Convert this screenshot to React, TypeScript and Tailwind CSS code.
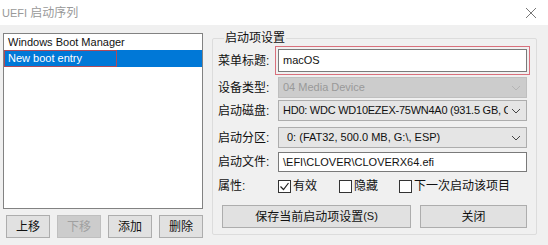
import React from "react";

const font = { fontFamily: '"Liberation Sans", "Noto Sans CJK SC", sans-serif' };

function Chevron({ color = "#555" }: { color?: string }) {
    return (
        <svg width="10" height="6" viewBox="0 0 10 6" className="shrink-0">
            <path d="M1 1 L5 5 L9 1" fill="none" stroke={color} strokeWidth="1" />
        </svg>
    );
}

function Combo({ text, disabled, pl = "pl-[4px]", extra = "" }: { text: string; disabled?: boolean; pl?: string; extra?: string }) {
    return (
        <div
            className={
                (disabled
                    ? "border-[#bfbfbf] bg-[#cccccc] text-[#999] "
                    : "border-[#adadad] bg-[#e5e5e5] text-[#111] ") +
                "flex h-[21px] w-[249px] items-center justify-between gap-[3px] border pr-[5px] text-[11px] " +
                pl
            }
        >
            <span className={"overflow-hidden whitespace-nowrap " + extra}>{text}</span>
            <Chevron color={disabled ? "#b5b5b5" : "#444"} />
        </div>
    );
}

function Check({ checked, label, w }: { checked?: boolean; label: string; w: string }) {
    return (
        <div className={"flex items-center gap-[2px] " + w}>
            <div className="flex h-[13px] w-[13px] shrink-0 items-center justify-center border border-[#333] bg-white">
                {checked && (
                    <svg width="11" height="11" viewBox="0 0 11 11">
                        <path d="M1.5 5.5 L4.5 8.5 L9.5 2" fill="none" stroke="#222" strokeWidth="1.2" />
                    </svg>
                )}
            </div>
            <span className="whitespace-nowrap">{label}</span>
        </div>
    );
}

function Btn({ children, disabled, w }: { children: React.ReactNode; disabled?: boolean; w: string }) {
    return (
        <div
            className={
                (disabled
                    ? "border-[#bfbfbf] bg-[#cccccc] text-[#a0a0a0] "
                    : "border-[#adadad] bg-[#e1e1e1] text-[#111] ") +
                "flex h-[23px] items-center justify-center border " +
                w
            }
        >
            {children}
        </div>
    );
}

export default function App() {
    const labels = "w-[60px] shrink-0 whitespace-nowrap";
    return (
        <div className="h-[245px] w-[548px] overflow-hidden bg-[#f0f0f0] text-[12px] leading-none" style={font}>
            {/* title bar */}
            <div className="flex h-[25px] items-center justify-between bg-white pl-[2px] pr-[11px] text-[#999]">
                <span>
                    <span className="text-[11px]">UEFI </span>启动序列
                </span>
                <svg width="12" height="12" viewBox="0 0 12 12">
                    <path d="M1 1 L11 11 M11 1 L1 11" stroke="#777" strokeWidth="1" />
                </svg>
            </div>

            <div className="flex">
                {/* left column */}
                <div className="ml-[3px] mt-[8px] flex w-[200px] flex-col">
                    <div className="h-[176px] border border-[#828282] bg-white text-[11px] text-[#111]">
                        <div className="flex h-[16px] items-center pl-[4px]">Windows Boot Manager</div>
                        <div className="flex h-[17px] items-center bg-[#0078d7] text-white">
                            <span className="flex h-[17px] w-[113px] items-center border border-[#b04a5a] pl-[3px]">
                                New boot entry
                            </span>
                        </div>
                    </div>
                    <div className="mt-[6px] flex gap-[7px] pl-[3px]">
                        <Btn w="w-[44px]">上移</Btn>
                        <Btn w="w-[44px]" disabled>下移</Btn>
                        <Btn w="w-[44px]">添加</Btn>
                        <Btn w="w-[44px]">删除</Btn>
                    </div>
                </div>

                {/* group box */}
                <fieldset className="ml-[9px] mt-[7px] h-[203px] w-[325px] rounded-[2px] border border-[#dcdcdc] pl-[5px]">
                    <legend className="ml-[6px] px-[1px] text-[#111]">启动项设置</legend>
                    <div className="flex flex-col text-[#111]">
                        <div className="mt-[5px] flex h-[23px] items-center">
                            <span className={labels}>菜单标题:</span>
                            <div className="flex h-[23px] w-[249px] items-center border border-[#7a7a7a] bg-white pl-[4px] text-[11px] outline outline-1 outline-offset-[2px] outline-[#d9707c]">
                                macOS
                            </div>
                        </div>
                        <div className="mt-[5px] flex h-[21px] items-center">
                            <span className={labels}>设备类型:</span>
                            <Combo text="04 Media Device" disabled />
                        </div>
                        <div className="mt-[2px] flex h-[21px] items-center">
                            <span className={labels}>启动磁盘:</span>
                            <Combo text="HD0: WDC WD10EZEX-75WN4A0 (931.5 GB, C" extra="tracking-[-0.25px]" />
                        </div>
                        <div className="mt-[6px] flex h-[21px] items-center">
                            <span className={labels}>启动分区:</span>
                            <Combo text="0: (FAT32, 500.0 MB, G:\, ESP)" pl="pl-[8px]" />
                        </div>
                        <div className="mt-[4px] flex h-[20px] items-center">
                            <span className={labels}>启动文件:</span>
                            <div className="flex h-[20px] w-[249px] items-center border border-[#7a7a7a] bg-white pl-[4px] text-[11px]">
                                \EFI\CLOVER\CLOVERX64.efi
                            </div>
                        </div>
                        <div className="mt-[5px] flex h-[18px] items-center">
                            <span className={labels}>属性:</span>
                            <div className="flex">
                                <Check checked label="有效" w="w-[61px]" />
                                <Check label="隐藏" w="w-[60px]" />
                                <Check label="下一次启动该项目" w="w-[120px]" />
                            </div>
                        </div>
                        <div className="mt-[10px] flex gap-[9px] pl-[4px]">
                            <Btn w="w-[189px]">
                                保存当前启动项设置<span className="text-[11px]">(S)</span>
                            </Btn>
                            <Btn w="w-[107px]">关闭</Btn>
                        </div>
                    </div>
                </fieldset>
            </div>
        </div>
    );
}
